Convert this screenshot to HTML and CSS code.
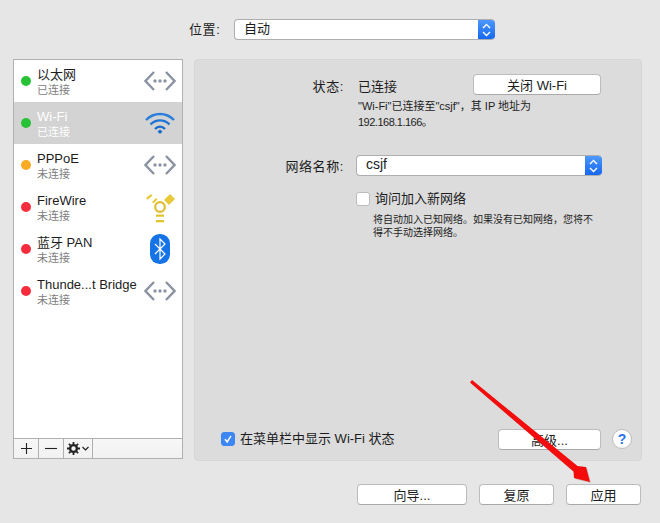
FILE: index.html
```html
<!DOCTYPE html>
<html lang="zh-CN">
<head>
    <meta charset="UTF-8">
    <meta name="viewport" content="width=device-width, initial-scale=1.0">
    <title>网络</title>
    <link rel="stylesheet" href="styles.css">
</head>
<body>
    <svg width="0" height="0" class="defs">
        <symbol id="ethernet" viewBox="0 0 32 20">
            <path d="M10 1 1.500 10l8.500 9" fill="none" stroke="#8b93a3" stroke-width="2.400"/>
            <path d="M22 1l8.500 9-8.500 9" fill="none" stroke="#8b93a3" stroke-width="2.400"/>
            <circle cx="11" cy="10" r="1.700" fill="#8b93a3"/>
            <circle cx="16" cy="10" r="1.700" fill="#8b93a3"/>
            <circle cx="21" cy="10" r="1.700" fill="#8b93a3"/>
        </symbol>
    </svg>

    <div class="window">
        <div class="location">
            <span class="location-label">位置:</span>
            <div class="select location-select">
                <span class="select-text">自动</span>
                <span class="stepper"><svg width="9" height="14" viewBox="0 0 9 14"><path d="M1 5l3.500-3.500L8 5M1 9l3.500 3.500L8 9" fill="none" stroke="#fff" stroke-width="1.400"/></svg></span>
            </div>
        </div>

        <div class="main">
            <div class="sidebar">
                <ul class="services">
                    <li class="service">
                        <span class="dot green"></span>
                        <div class="service-text"><div class="service-name">以太网</div><div class="service-status">已连接</div></div>
                        <svg class="service-icon" width="32" height="20"><use href="#ethernet"/></svg>
                    </li>
                    <li class="service selected">
                        <span class="dot green"></span>
                        <div class="service-text"><div class="service-name">Wi-Fi</div><div class="service-status">已连接</div></div>
                        <svg class="service-icon" width="32" height="24" viewBox="0 0 32 24">
                            <path d="M2 9C10 1 22 1 30 9" fill="none" stroke="#2b7fdc" stroke-width="2.400"/>
                            <path d="M6.500 13.500C12 8 20 8 25.500 13.500" fill="none" stroke="#1f74d6" stroke-width="2.400"/>
                            <path d="M11 18c3-3 7-3 10 0" fill="none" stroke="#1a6bd0" stroke-width="2.400"/>
                            <path d="M13.500 20.500 16 18.500l2.500 2L16 23z" fill="#1a6bd0"/>
                        </svg>
                    </li>
                    <li class="service">
                        <span class="dot orange"></span>
                        <div class="service-text"><div class="service-name">PPPoE</div><div class="service-status">未连接</div></div>
                        <svg class="service-icon" width="32" height="20"><use href="#ethernet"/></svg>
                    </li>
                    <li class="service">
                        <span class="dot red"></span>
                        <div class="service-text"><div class="service-name">FireWire</div><div class="service-status">未连接</div></div>
                        <svg class="service-icon firewire" width="32" height="32" viewBox="0 0 32 32">
                            <path d="M2 6l5-4 1.500 1.800-5 4zM8 10l4-4 1.500 1.500-4 4z" fill="#e8c93a"/>
                            <path d="M20 8l6-6 5 5-6 6z" fill="#e8c93a"/>
                            <circle cx="16" cy="15" r="4.800" fill="none" stroke="#dfbd2e" stroke-width="2.200"/>
                            <path d="M12 22.500h8v2.200h-8zM12 28h8v2.200h-8z" fill="#e3c232"/>
                        </svg>
                    </li>
                    <li class="service">
                        <span class="dot red"></span>
                        <div class="service-text"><div class="service-name">蓝牙 PAN</div><div class="service-status">未连接</div></div>
                        <svg class="service-icon bluetooth" width="20" height="30" viewBox="0 0 20 30">
                            <rect width="20" height="30" rx="9.500" fill="#1673e6"/>
                            <path d="M5 10l10 10-5 5V5l5 5L5 20" fill="none" stroke="#fff" stroke-width="1.200"/>
                        </svg>
                    </li>
                    <li class="service">
                        <span class="dot red"></span>
                        <div class="service-text"><div class="service-name">Thunde...t Bridge</div><div class="service-status">未连接</div></div>
                        <svg class="service-icon" width="32" height="20"><use href="#ethernet"/></svg>
                    </li>
                </ul>
                <div class="toolbar">
                    <span class="tool tool-add"><svg width="13" height="13" viewBox="0 0 13 13"><path d="M6.500 1v11M1 6.500h11" stroke="#222" stroke-width="1.100"/></svg></span>
                    <span class="tool tool-remove"><svg width="12" height="13" viewBox="0 0 12 13"><path d="M0 6.500h12" stroke="#222" stroke-width="1.100"/></svg></span>
                    <span class="tool tool-gear">
                        <svg width="13" height="13" viewBox="0 0 13 13">
                            <circle cx="6.500" cy="6.500" r="3.400" fill="none" stroke="#222" stroke-width="2.400"/>
                            <path d="M6.500 0v13M0 6.500h13M1.900 1.900l9.200 9.200M11.100 1.900l-9.200 9.200" stroke="#222" stroke-width="1.800" stroke-dasharray="2.200 8.600"/>
                        </svg>
                        <svg width="7" height="5" viewBox="0 0 7 5"><path d="M.5 1 3.500 4l3-3" fill="none" stroke="#222" stroke-width="1.200"/></svg>
                    </span>
                </div>
            </div>

            <div class="panel">
                <div class="row status-row">
                    <span class="row-label">状态:</span>
                    <span class="status-value">已连接</span>
                    <button class="btn wifi-off">关闭 Wi-Fi</button>
                </div>
                <p class="status-desc">"Wi-Fi"已连接至"csjf"，其 IP 地址为<br><span class="ip">192.168.1.166</span>。</p>

                <div class="row network-row">
                    <span class="row-label">网络名称:</span>
                    <div class="select network-select">
                        <span class="select-text">csjf</span>
                        <span class="stepper"><svg width="9" height="14" viewBox="0 0 9 14"><path d="M1 5l3.500-3.500L8 5M1 9l3.500 3.500L8 9" fill="none" stroke="#fff" stroke-width="1.400"/></svg></span>
                    </div>
                </div>
                <label class="ask-row"><span class="check"></span><span class="check-text">询问加入新网络</span></label>
                <p class="ask-desc">将自动加入已知网络。如果没有已知网络，您将不<br>得不手动选择网络。</p>

                <div class="panel-bottom">
                    <label class="menu-check"><span class="check checked"><svg width="10" height="10" viewBox="0 0 10 10"><path d="M2 5.200 4.200 8 8 1.800" fill="none" stroke="#fff" stroke-width="1.500"/></svg></span><span class="check-text">在菜单栏中显示 Wi-Fi 状态</span></label>
                    <button class="btn advanced">高级...</button>
                    <span class="help">?</span>
                </div>
            </div>
        </div>

        <div class="actions">
            <button class="btn wizard">向导...</button>
            <button class="btn revert">复原</button>
            <button class="btn apply">应用</button>
        </div>
    </div>

    <!-- red arrow pasted on top of the screenshot -->
    <svg class="arrow" width="660" height="523" viewBox="0 0 660 523">
        <path d="M472 380 577.500 466 586 467 590 482 574 478 573.500 471.500 470 382.500z" fill="#8a6a60" opacity=".35" transform="translate(1 1)"/>
        <path d="M472 380 577.500 466 586 467 590 482 574 478 573.500 471.500 470 382.500z" fill="#f40c0c"/>
    </svg>
</body>
</html>
```

FILE: styles.css
```css
* {
    box-sizing: border-box;
}

body {
    margin: 0;
    background-color: #e6e6e6;
    font-family: "Liberation Sans", "Noto Sans CJK SC", sans-serif;
    font-size: 13px;
    color: #1c1c1c;
}

.defs {
    display: block;
    height: 0;
}

.window {
    position: relative;
    width: 660px;
    height: 523px;
    padding: 19px 18px 0 13px;
}

.location {
    display: flex;
    align-items: center;
    height: 21px;
    padding-left: 176px;
}

.location-label {
    width: 44px;
    margin-right: 1px;
    padding-bottom: 2px;
    letter-spacing: 0.6px;
    white-space: nowrap;
}

.select {
    display: flex;
    justify-content: space-between;
    height: 21px;
    background-color: white;
    border: 1px solid #aeaeae;
    border-right: none;
    border-radius: 4px;
    overflow: hidden;
}

.location-select {
    width: 261px;
}

.network-select {
    width: 246px;
}

.select-text {
    padding-left: 9px;
    line-height: 17px;
}

.network-select .select-text {
    font-size: 14px;
}

.stepper {
    display: flex;
    align-items: center;
    justify-content: center;
    width: 17px;
    margin-top: -1px;
    margin-bottom: -1px;
    background: linear-gradient(#4f9afb, #1465f2);
}

.main {
    display: flex;
    gap: 11px;
    margin-top: 19px;
}

.sidebar {
    display: flex;
    flex-direction: column;
    width: 170px;
    height: 400px;
    background-color: white;
    border: 1px solid #b0b0b0;
}

.services {
    flex: 1;
    margin: 0;
    padding: 0;
    list-style: none;
}

.service {
    display: flex;
    align-items: center;
    height: 42px;
    padding-left: 7px;
}

.service.selected {
    background-color: #d3d3d3;
    color: white;
}

.dot {
    flex: none;
    width: 10px;
    height: 10px;
    margin-right: 6px;
    border-radius: 50%;
}

.green {
    background-color: #27c235;
}

.orange {
    background-color: #fbab24;
}

.red {
    background-color: #f72c3c;
}

.service-text {
    flex: 1;
    min-width: 0;
    white-space: nowrap;
}

.service-name {
    height: 17px;
    line-height: 17px;
    font-size: 13px;
}

.service-status {
    height: 14px;
    line-height: 14px;
    font-size: 11px;
    color: #7d7d7d;
}

.selected .service-status {
    color: white;
}

.service-icon {
    flex: none;
    margin-right: 6px;
}

.service-icon.firewire {
    margin-top: 2px;
}

.service-icon.bluetooth {
    margin-right: 12px;
}

.toolbar {
    display: flex;
    height: 20px;
    background: linear-gradient(#f7f7f7, #f1f1f1);
    border-top: 1px solid #b0b0b0;
}

.tool {
    display: flex;
    align-items: center;
    justify-content: center;
    gap: 2px;
    height: 100%;
    border-right: 1px solid #b0b0b0;
}

.tool-add,
.tool-remove {
    width: 25px;
}

.tool-gear {
    width: 29px;
}

.panel {
    position: relative;
    width: 448px;
    height: 402px;
    padding-top: 14px;
    background-color: #dcdcdc;
    border: 1px solid #d6d6d6;
    border-radius: 4px;
}

.row {
    display: flex;
    align-items: center;
    height: 21px;
}

.row-label {
    width: 149px;
    letter-spacing: 0.6px;
    text-align: right;
    white-space: nowrap;
}

.status-value {
    width: 115px;
    margin-left: 14px;
    padding-top: 1px;
}

.btn {
    height: 21px;
    padding: 0 0 2px;
    background-color: white;
    border: 1px solid #bcbcbc;
    border-bottom-color: #a9a9a9;
    border-radius: 4px;
    font-family: inherit;
    font-size: 13px;
    color: #1c1c1c;
}

.wifi-off {
    width: 128px;
}

.status-row .row-label {
    padding-top: 1px;
}

.status-desc {
    height: 32px;
    margin: 3px 0 0 163px;
    font-size: 11px;
    line-height: 16px;
}

.ip {
    letter-spacing: -0.5px;
}

.network-row {
    margin-top: 25px;
}

.network-row .select {
    margin-left: 12px;
}

.ask-row {
    display: flex;
    align-items: center;
    gap: 5px;
    height: 16px;
    margin: 15px 0 0 161px;
}

.check-text {
    margin-bottom: 3px;
}

.check {
    display: flex;
    flex: none;
    align-items: center;
    justify-content: center;
    width: 14px;
    height: 14px;
    background-color: white;
    border: 1px solid #bcbcbc;
    border-radius: 3px;
}

.check.checked {
    background-color: #3d86f6;
    border-color: #3d86f6;
}

.ask-desc {
    margin: 6px 0 0 178px;
    font-size: 10px;
    line-height: 13px;
}

.panel-bottom {
    position: absolute;
    right: 9px;
    bottom: 10px;
    left: 26px;
    display: flex;
    align-items: center;
}

.menu-check {
    display: flex;
    flex: 1;
    align-items: center;
    gap: 5px;
}

.advanced {
    width: 103px;
}

.help {
    width: 20px;
    height: 20px;
    margin-left: 11px;
    background-color: white;
    border: 1px solid #bcbcbc;
    border-radius: 50%;
    font-size: 14px;
    font-weight: bold;
    line-height: 18px;
    text-align: center;
    color: #2a75ee;
}

.actions {
    display: flex;
    gap: 12px;
    margin-top: 23px;
    padding-left: 344px;
}

.wizard {
    width: 110px;
}

.revert,
.apply {
    width: 75px;
}

.arrow {
    position: absolute;
    top: 0;
    left: 0;
    pointer-events: none;
}
```
